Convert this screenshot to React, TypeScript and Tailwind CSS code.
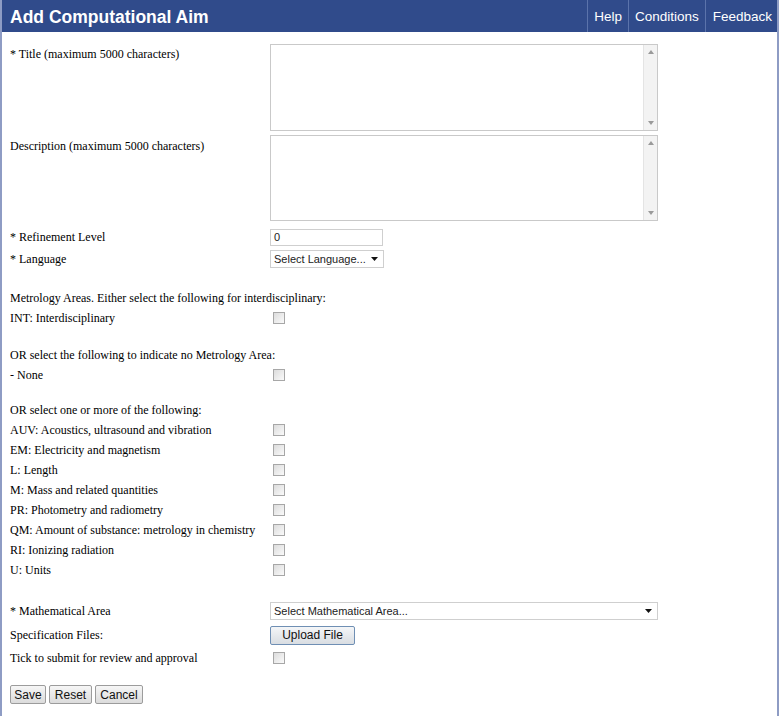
const serif = { fontFamily: '"Liberation Serif", "Times New Roman", serif' };
const sans = { fontFamily: '"Liberation Sans", Arial, sans-serif' };

const areas = [
  "AUV: Acoustics, ultrasound and vibration",
  "EM: Electricity and magnetism",
  "L: Length",
  "M: Mass and related quantities",
  "PR: Photometry and radiometry",
  "QM: Amount of substance: metrology in chemistry",
  "RI: Ionizing radiation",
  "U: Units",
];

function Checkbox() {
  return (
    <div className="ml-[3px] h-[12px] w-[12px] border border-[#a7a7a7] bg-gradient-to-br from-[#dcdcdc] to-[#fafafa]" />
  );
}

function TextArea({ height }: { height: string }) {
  return (
    <div className={`flex w-[388px] border border-[#c9c9c9] bg-white ${height}`}>
      <div className="flex-1" />
      <div className="flex w-[14px] flex-col items-center justify-between border-l border-[#e4e4e4] bg-[#f3f3f3] py-[5px]">
        <svg width="6" height="4" viewBox="0 0 6 4">
          <path d="M0 4 L3 0 L6 4 Z" fill="#9a9a9a" />
        </svg>
        <svg width="6" height="4" viewBox="0 0 6 4">
          <path d="M0 0 L6 0 L3 4 Z" fill="#9a9a9a" />
        </svg>
      </div>
    </div>
  );
}

function Select({ text, width }: { text: string; width: string }) {
  return (
    <div
      className={`flex h-[18px] items-center justify-between overflow-hidden whitespace-nowrap border border-[#cfcfcf] bg-white pl-[3px] pr-[5px] text-[11px] text-[#222] ${width}`}
      style={sans}
    >
      <span>{text}</span>
      <svg width="7" height="4" viewBox="0 0 7 4" className="shrink-0">
        <path d="M0 0 L7 0 L3.5 4 Z" fill="#111" />
      </svg>
    </div>
  );
}

function Row({
  label,
  children,
  className = "h-[20px]",
}: {
  label: string;
  children?: React.ReactNode;
  className?: string;
}) {
  return (
    <div className={`flex items-center ${className}`}>
      <div className="w-[260px] shrink-0">{label}</div>
      <div className="flex items-center">{children}</div>
    </div>
  );
}

function Button({ label, className = "" }: { label: string; className?: string }) {
  return (
    <div
      className={`flex h-[19px] items-center justify-center rounded-[2px] border border-[#9c9c9c] bg-gradient-to-b from-[#f6f6f6] to-[#dcdcdc] text-[12px] text-[#111] ${className}`}
      style={sans}
    >
      {label}
    </div>
  );
}

export default function App() {
  return (
    <div className="h-[716px] w-[780px] bg-white">
      <div className="h-full w-[779px] border-x-2 border-[#8e9cc4]">
        <div className="flex h-[32px] justify-between bg-[#304b8b] text-white" style={sans}>
          <h1 className="flex items-center pl-[8px] pt-[3px] text-[17.5px] font-bold">
            Add Computational Aim
          </h1>
          <nav className="flex h-full text-[13.5px]">
            {["Help", "Conditions", "Feedback"].map((item) => (
              <div
                key={item}
                className="flex h-full items-center border-l border-[#5b73ab] pl-[6px] pr-[6px] pt-[3px] last:pl-[7px] last:pr-[5px]"
              >
                {item}
              </div>
            ))}
          </nav>
        </div>

        <div className="pl-[8px] pt-[12px] text-[12px] text-black" style={serif}>
          <div className="flex items-start">
            <div className="w-[260px] pt-[1px]">* Title (maximum 5000 characters)</div>
            <TextArea height="h-[87px]" />
          </div>
          <div className="mt-[4px] flex items-start">
            <div className="w-[260px] pt-[2px]">Description (maximum 5000 characters)</div>
            <TextArea height="h-[86px]" />
          </div>

          <Row label="* Refinement Level" className="mt-[6px] h-[20px]">
            <div
              className="flex h-[17px] w-[113px] items-center border border-[#cfcfcf] bg-white pl-[3px] text-[11px] text-[#222]"
              style={sans}
            >
              0
            </div>
          </Row>
          <Row label="* Language" className="mt-[2px] h-[20px]">
            <Select text="Select Language..." width="w-[114px]" />
          </Row>

          <div className="mt-[19px] flex h-[20px] items-center">
            Metrology Areas. Either select the following for interdisciplinary:
          </div>
          <Row label="INT: Interdisciplinary">
            <Checkbox />
          </Row>

          <div className="mt-[17px] flex h-[20px] items-center">
            OR select the following to indicate no Metrology Area:
          </div>
          <Row label="- None">
            <Checkbox />
          </Row>

          <div className="mt-[15px] flex h-[20px] items-center">
            OR select one or more of the following:
          </div>
          {areas.map((area) => (
            <Row key={area} label={area}>
              <Checkbox />
            </Row>
          ))}

          <Row label="* Mathematical Area" className="mt-[21px] h-[20px]">
            <Select text="Select Mathematical Area..." width="w-[388px]" />
          </Row>
          <Row label="Specification Files:" className="mt-[3px] h-[22px]">
            <div
              className="flex h-[19px] w-[85px] items-center justify-center rounded-[2px] border border-[#6f8fb4] bg-gradient-to-b from-[#f4f6f8] to-[#d9dde2] text-[12px] text-[#111]"
              style={sans}
            >
              Upload File
            </div>
          </Row>
          <Row label="Tick to submit for review and approval" className="mt-[2px] h-[20px]">
            <Checkbox />
          </Row>

          <div className="mt-[17px] flex gap-[3px]">
            <Button label="Save" className="w-[36px]" />
            <Button label="Reset" className="w-[43px]" />
            <Button label="Cancel" className="w-[48px]" />
          </div>
        </div>
      </div>
    </div>
  );
}
